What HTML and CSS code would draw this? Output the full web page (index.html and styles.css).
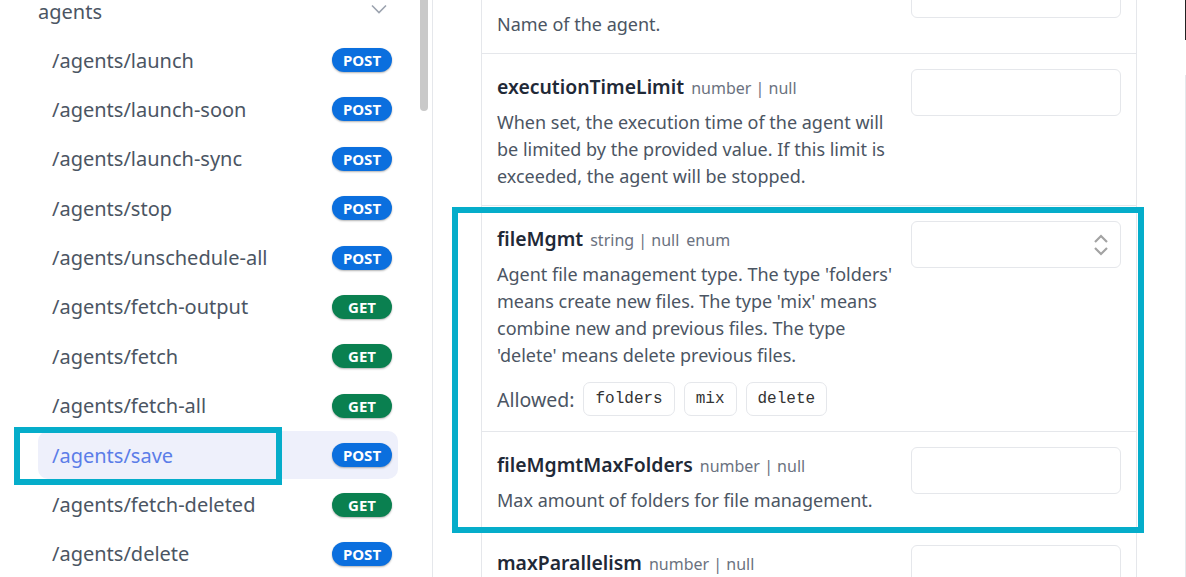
FILE: index.html
```html
<!DOCTYPE html>
<html lang="en">
<head>
    <meta charset="UTF-8">
    <meta name="viewport" content="width=device-width, initial-scale=1.0">
    <title>Agents API</title>
    <link rel="stylesheet" href="styles.css">
</head>
<body>
    <nav class="sidebar">
        <div class="group-head">
            <span>agents</span>
            <svg class="chevron" width="16" height="10" viewBox="0 0 16 10"><path d="M1 1.5l7 7 7-7" fill="none" stroke="#9ca3af" stroke-width="1.6"/></svg>
        </div>
        <ul class="endpoints">
            <li class="endpoint"><span>/agents/launch</span><b class="method post">POST</b></li>
            <li class="endpoint"><span>/agents/launch-soon</span><b class="method post">POST</b></li>
            <li class="endpoint"><span>/agents/launch-sync</span><b class="method post">POST</b></li>
            <li class="endpoint"><span>/agents/stop</span><b class="method post">POST</b></li>
            <li class="endpoint"><span>/agents/unschedule-all</span><b class="method post">POST</b></li>
            <li class="endpoint"><span>/agents/fetch-output</span><b class="method get">GET</b></li>
            <li class="endpoint"><span>/agents/fetch</span><b class="method get">GET</b></li>
            <li class="endpoint"><span>/agents/fetch-all</span><b class="method get">GET</b></li>
            <li class="endpoint active"><span>/agents/save</span><b class="method post">POST</b></li>
            <li class="endpoint"><span>/agents/fetch-deleted</span><b class="method get">GET</b></li>
            <li class="endpoint"><span>/agents/delete</span><b class="method post">POST</b></li>
        </ul>
        <div class="scroll-thumb"></div>
        <div class="mark mark-nav"></div>
    </nav>

    <main class="panel">
        <div class="fields">
            <div class="field">
                <div class="field-info">
                    <div class="field-title">name <span class="type">string | null</span></div>
                    <p class="desc">Name of the agent.</p>
                </div>
                <div class="input"></div>
            </div>
            <div class="field">
                <div class="field-info">
                    <div class="field-title">executionTimeLimit <span class="type">number | null</span></div>
                    <p class="desc">When set, the execution time of the agent will be limited by the provided value. If this limit is exceeded, the agent will be stopped.</p>
                </div>
                <div class="input"></div>
            </div>
            <div class="field">
                <div class="field-info">
                    <div class="field-title">fileMgmt <span class="type">string | null</span> <span class="type">enum</span></div>
                    <p class="desc">Agent file management type. The type 'folders' means create new files. The type 'mix' means combine new and previous files. The type 'delete' means delete previous files.</p>
                    <div class="allowed">
                        <span>Allowed:</span>
                        <code class="chip">folders</code>
                        <code class="chip">mix</code>
                        <code class="chip">delete</code>
                    </div>
                </div>
                <div class="input select">
                    <svg width="18" height="24" viewBox="0 0 18 24"><path d="M3 9l6-6 6 6M3 15l6 6 6-6" fill="none" stroke="#a3a3a3" stroke-width="2.2"/></svg>
                </div>
            </div>
            <div class="field">
                <div class="field-info">
                    <div class="field-title">fileMgmtMaxFolders <span class="type">number | null</span></div>
                    <p class="desc">Max amount of folders for file management.</p>
                </div>
                <div class="input"></div>
            </div>
            <div class="field">
                <div class="field-info">
                    <div class="field-title">maxParallelism <span class="type">number | null</span></div>
                    <p class="desc">Maximum number of parallel executions.</p>
                </div>
                <div class="input"></div>
            </div>
        </div>
        <div class="mark mark-fields"></div>
    </main>

    <div class="edge"></div>
</body>
</html>
```

FILE: styles.css
```css
body {
    margin: 0;
    height: 577px;
    overflow: hidden;
    display: flex;
    background: #fff;
    font-family: "Noto Sans", "Open Sans", sans-serif;
    color: #4b5563;
}
.sidebar {
    position: relative;
    width: 360px;
    flex: 0 0 360px;
    padding: 0 34px 0 38px;
    border-right: 1px solid #e5e7eb;
}
.group-head {
    display: flex;
    align-items: center;
    justify-content: space-between;
    height: 24px;
    padding-right: 11px;
    font-size: 20px;
    color: #4b5563;
}
.group-head span {
    line-height: 24px;
}
.chevron {
    margin-top: -6px;
}
.endpoints {
    list-style: none;
    margin: 12px 0 0;
    padding: 0;
    display: flex;
    flex-direction: column;
    gap: 1.4px;
}
.endpoint {
    display: flex;
    align-items: center;
    justify-content: space-between;
    height: 48px;
    padding: 0 6px 0 14px;
    border-radius: 10px;
    font-size: 20px;
    color: #4b5563;
}
.endpoint.active {
    background-color: #eef0fb;
    color: #5b7de8;
}
.method {
    width: 60px;
    height: 24px;
    line-height: 24px;
    border-radius: 12px;
    text-align: center;
    font-size: 15px;
    font-weight: bold;
    color: white;
    box-shadow: 0 1px 2px rgba(0, 0, 0, 0.3);
}
.post {
    background-color: #0b6fde;
}
.get {
    background-color: #0a8050;
}
.scroll-thumb {
    position: absolute;
    top: -10px;
    right: 4px;
    width: 8px;
    height: 121px;
    border-radius: 4px;
    background-color: #c9c9c9;
}

/* cyan highlight frames drawn over the screenshot */
.mark {
    position: absolute;
    border: 6px solid #05adca;
    pointer-events: none;
}
.mark-nav {
    left: 14px;
    top: 427px;
    width: 256px;
    height: 46px;
}
.mark-fields {
    left: 19px;
    top: 207px;
    width: 680px;
    height: 314px;
}

.panel {
    position: relative;
    padding-left: 48px;
}
.fields {
    width: 654px;
    margin-top: -45px;
    border: 1px solid #e5e7eb;
    border-bottom: none;
}
.field {
    display: grid;
    grid-template-columns: 1fr 210px;
    gap: 15px;
    padding: 15px;
    border-bottom: 1px solid #e5e7eb;
}
.field-title {
    height: 36px;
    line-height: 36px;
    font-size: 19.4px;
    font-weight: 600;
    color: #1f2937;
}
.type {
    margin-left: 2px;
    font-size: 16px;
    font-weight: normal;
    color: #6b7280;
}
.desc {
    margin: 4px 0 0;
    font-size: 18px;
    line-height: 27px;
    color: #4b5563;
}
.allowed {
    display: flex;
    align-items: center;
    gap: 9px;
    margin-top: 13px;
    font-size: 19.5px;
}
.chip {
    height: 32px;
    line-height: 32px;
    padding: 0 11px;
    border: 1px solid #e5e7eb;
    border-radius: 7px;
    font-family: "Liberation Mono", monospace;
    font-size: 16px;
    color: #333;
}
.input {
    height: 45px;
    border: 1px solid #e5e7eb;
    border-radius: 6px;
}
.select {
    display: flex;
    align-items: center;
    justify-content: flex-end;
    padding-right: 10px;
}
.edge {
    margin-left: auto;
    width: 1px;
    background: linear-gradient(#222 0 40px, transparent 40px 75px, #e5e7eb 75px);
}
```
